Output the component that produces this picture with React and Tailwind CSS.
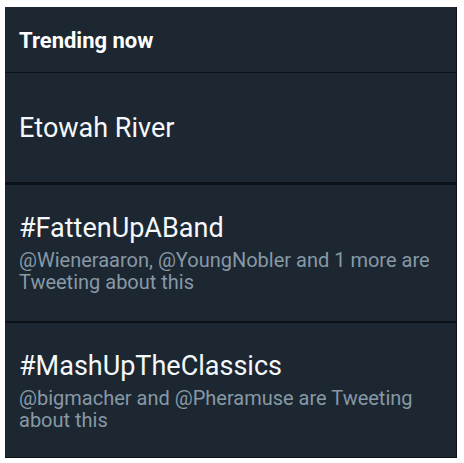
import React from "react";

const trends = [
  {
    tag: "#FattenUpABand",
    note: "@Wieneraaron, @YoungNobler and 1 more are Tweeting about this",
    box: "h-[138px] shrink-0 border-b-[2px] border-[#0d1218]",
  },
  {
    tag: "#MashUpTheClassics",
    note: "@bigmacher and @Pheramuse are Tweeting about this",
    box: "flex-1",
  },
];

const App = () => {
  return (
    <div className="w-[464px] h-[463px] bg-white pt-[7px] pl-[5px] font-['Roboto',sans-serif]">
      <div className="w-[452px] h-[451px] bg-[#1c2732] border-r border-b border-[#0d1218] flex flex-col overflow-hidden">
        {/* Header */}
        <div className="h-[66px] shrink-0 pt-[23px] px-[14px] border-b border-[#0d1218]">
          <h2 className="text-[22px] font-bold text-white leading-none">Trending now</h2>
        </div>

        {/* Plain trend */}
        <div className="h-[112px] shrink-0 pt-[39px] px-[14px] border-b-[3px] border-[#0d1218]">
          <div className="text-[27px] text-[#f5f8fa] leading-[32px]">Etowah River</div>
        </div>

        {/* Hashtag trends */}
        {trends.map((t) => (
          <div key={t.tag} className={`${t.box} flex flex-col pt-[27px] px-[14px]`}>
            <div className="text-[27px] text-[#f5f8fa] leading-[32px]">{t.tag}</div>
            <p className="mt-[5px] text-[20px] text-[#8899a6] leading-[22px]">{t.note}</p>
          </div>
        ))}
      </div>
    </div>
  );
};

export default App;
